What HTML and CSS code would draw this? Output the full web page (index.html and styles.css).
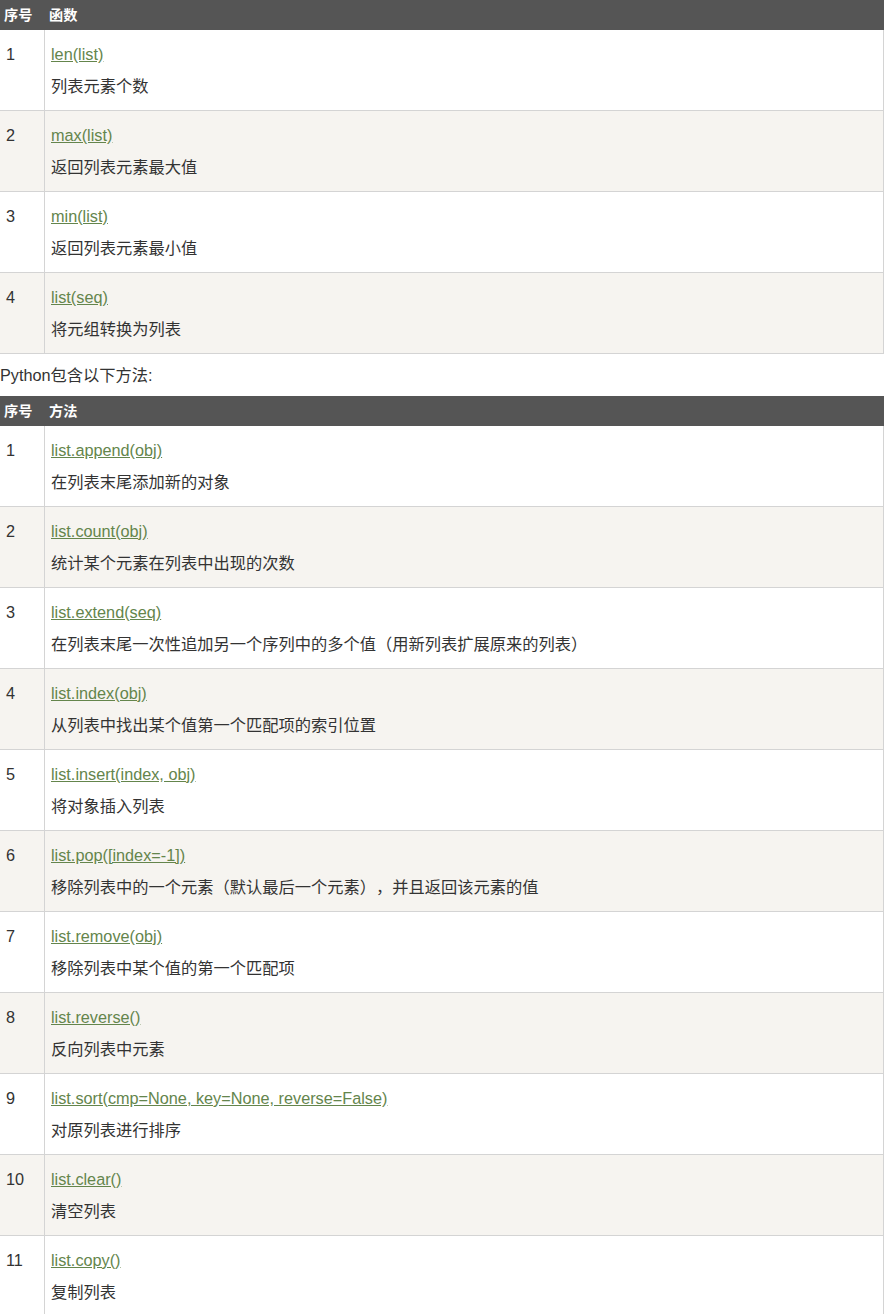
FILE: index.html
```html
<!DOCTYPE html>
<html lang="zh-CN">
<head>
<meta charset="utf-8">
<title>Python 列表函数与方法</title>
<link rel="stylesheet" href="styles.css">
</head>
<body>
<div class="page">
<table class="reference">
  <colgroup><col class="c-num"><col class="c-main"></colgroup>
  <thead><tr><th>序号</th><th>函数</th></tr></thead>
  <tbody>
    <tr><td>1</td><td><a href="#">len(list)</a><br>列表元素个数</td></tr>
    <tr><td>2</td><td><a href="#">max(list)</a><br>返回列表元素最大值</td></tr>
    <tr><td>3</td><td><a href="#">min(list)</a><br>返回列表元素最小值</td></tr>
    <tr><td>4</td><td><a href="#">list(seq)</a><br>将元组转换为列表</td></tr>
  </tbody>
</table>
<p class="intro">Python包含以下方法:</p>
<table class="reference">
  <colgroup><col class="c-num"><col class="c-main"></colgroup>
  <thead><tr><th>序号</th><th>方法</th></tr></thead>
  <tbody>
    <tr><td>1</td><td><a href="#">list.append(obj)</a><br>在列表末尾添加新的对象</td></tr>
    <tr><td>2</td><td><a href="#">list.count(obj)</a><br>统计某个元素在列表中出现的次数</td></tr>
    <tr><td>3</td><td><a href="#">list.extend(seq)</a><br>在列表末尾一次性追加另一个序列中的多个值（用新列表扩展原来的列表）</td></tr>
    <tr><td>4</td><td><a href="#">list.index(obj)</a><br>从列表中找出某个值第一个匹配项的索引位置</td></tr>
    <tr><td>5</td><td><a href="#">list.insert(index, obj)</a><br>将对象插入列表</td></tr>
    <tr><td>6</td><td><a href="#">list.pop([index=-1])</a><br>移除列表中的一个元素（默认最后一个元素），并且返回该元素的值</td></tr>
    <tr><td>7</td><td><a href="#">list.remove(obj)</a><br>移除列表中某个值的第一个匹配项</td></tr>
    <tr><td>8</td><td><a href="#">list.reverse()</a><br>反向列表中元素</td></tr>
    <tr><td>9</td><td><a href="#">list.sort(cmp=None, key=None, reverse=False)</a><br>对原列表进行排序</td></tr>
    <tr><td>10</td><td><a href="#">list.clear()</a><br>清空列表</td></tr>
    <tr><td>11</td><td><a href="#">list.copy()</a><br>复制列表</td></tr>
  </tbody>
</table>
</div>
</body>
</html>
```
FILE: styles.css
```css
html, body {
  margin: 0;
  padding: 0;
  background: #fff;
}
body {
  font-family: "Liberation Sans", Arial, "Noto Sans CJK SC", sans-serif;
  font-size: 16.25px;
  color: #333;
  text-spacing-trim: space-all;
}
.page {
  width: 884px;
}
.reference {
  width: 884px;
  table-layout: fixed;
  border-collapse: separate;
  border-spacing: 0;
}
.c-num { width: 45px; }
.c-main { width: 839px; }
.reference th {
  box-sizing: border-box;
  background: #555;
  color: #fff;
  font-size: 14.2px;
  font-weight: bold;
  text-align: left;
  vertical-align: top;
  line-height: 24px;
  padding: 3px 4px;
}
.reference td {
  box-sizing: border-box;
  vertical-align: top;
  line-height: 32px;
  padding: 8px 6px;
  border-bottom: 1px solid #d4d4d4;
  border-right: 1px solid #d4d4d4;
}
.reference tbody tr:nth-child(even) td {
  background: #f6f4f0;
}
.reference a {
  color: #64854c;
  text-decoration: underline;
}
.intro {
  margin: 9px 0;
  line-height: 24px;
}
```
